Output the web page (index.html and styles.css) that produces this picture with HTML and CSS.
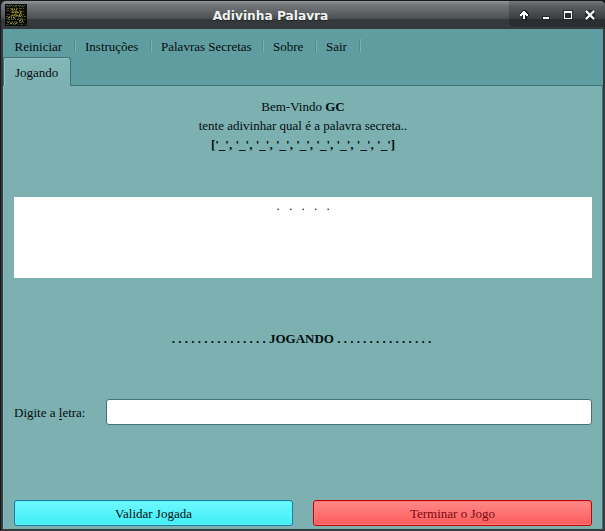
FILE: index.html
```html
<!DOCTYPE html>
<html lang="pt">
<head>
<meta charset="utf-8">
<title>Adivinha Palavra</title>
<link rel="stylesheet" href="styles.css">
</head>
<body>
<div class="window">
  <header class="titlebar">
    <svg class="app-icon" viewBox="0 0 22 22">
      <rect width="22" height="22" fill="#0b0c08"/>
      <g fill="none" stroke-width="1">
        <path stroke="#54572a" stroke-dasharray="2 1 3 1 1 1" d="M1 1.5h19M2 4.5h18M1 12.5h20M3 15.5h17M2 18.5h18"/>
        <path stroke="#354338" stroke-dasharray="3 2 1 1" d="M2 2.5h18M1 6.5h5M16 7.5h5M2 10.5h18M1 14.5h19M2 17.5h18M1 20.5h20"/>
        <path stroke="#8c831b" stroke-dasharray="2 1 1 1" d="M6 5.5h6M7 8.5h9M6 11.5h11M3 13.5h7M14 16.5h5M5 19.5h7"/>
        <path stroke="#aaa018" stroke-width=".8" d="M8 5v3h-2M10 7h2v2h-2zM14 7h2v3h-2M8 11h3M13 12h3"/>
      </g>
    </svg>
    <h1 class="title">Adivinha Palavra</h1>
    <div class="controls">
      <svg viewBox="0 0 96 27" shape-rendering="crispEdges">
        <g fill="#1b1f21"><path d="M14 10h3v1h1v1h1v1h1v3h-2v4h-5v-4h-2v-3h1v-1h1v-1h1z"/><path d="M33 16h8v4h-8zM54 10h10v10H54zM76 10h10v10H76z" fill-opacity=".7"/></g>
        <g fill="#fff"><path d="M14 11h2v1h1v1h1v1h1v2h-2v-1h-1v4h-2v-4h-1v1h-2v-2h1v-1h1v-1h1z"/><path d="M34 17h6v2h-6z"/><path fill-rule="evenodd" d="M55 11h8v8h-8zM56 13v5h6v-5z"/></g>
        <path d="M77.5 11.5l7 7M84.5 11.5l-7 7" stroke="#fff" stroke-width="2.2" stroke-linecap="round" shape-rendering="auto"/>
      </svg>
    </div>
  </header>
  <div class="body">
    <nav class="menu">
      <a class="item reiniciar">Reiniciar</a>
      <a class="item instrucoes">Instruções</a>
      <a class="item palavras">Palavras Secretas</a>
      <a class="item sobre">Sobre</a>
      <a class="item sair">Sair</a>
    </nav>
    <div class="tabs"><div class="tab">Jogando</div><div class="tab-rest"></div></div>
    <main class="panel">
      <div class="intro">
        <p>Bem-Vindo <b>GC</b></p>
        <p>tente adivinhar qual é a palavra secreta..</p>
        <p><b>['_', '_', '_', '_', '_', '_', '_', '_', '_']</b></p>
      </div>
      <div class="board">. &nbsp; . &nbsp; . &nbsp; . &nbsp; .</div>
      <p class="status">. . . . . . . . . . . . . . . JOGANDO . . . . . . . . . . . . . . .</p>
      <div class="field">
        <label for="letra">Digite a <span class="key">l</span>etra:</label>
        <input id="letra" type="text">
      </div>
      <div class="actions">
        <button class="validate">Validar Jogada</button>
        <button class="finish">Terminar o Jogo</button>
      </div>
    </main>
  </div>
</div>
</body>
</html>
```
FILE: styles.css
```css
* { box-sizing: border-box; }
body {
  margin: 0;
  background: #17191f;
  font: 13px/19px "Liberation Serif", serif;
  color: #050e10;
}
p, h1 { margin: 0; }
.window {
  height: 531px;
  display: flex;
  flex-direction: column;
  padding-top: 1px;
  border-left: 1px solid #17191c;
}
.titlebar {
  height: 28px;
  flex: none;
  display: flex;
  border-radius: 5px 5px 0 0;
  background: linear-gradient(#919396 0, #74777a 4px, #4b4f51 18px, #343a3c 18px, #34393b 28px);
}
.app-icon {
  width: 22px;
  height: 22px;
  margin: 3px 0 0 4px;
}
.title {
  flex: 1;
  padding: 1px 0 0 5px;
  text-align: center;
  font: bold 12.2px/28px "DejaVu Sans", sans-serif;
  color: #f1f2f2;
  text-shadow: 0 1px 1px #202425;
}
.controls {
  width: 96px;
  height: 26px;
  border-radius: 0 5px 0 6px;
  overflow: hidden;
  background: linear-gradient(#76787a 0, #5a5d5f 5px, #393d3f 18px, #2a2e30 18px, #2a2e30 26px);
}
.controls svg {
  display: block;
  width: 96px;
  height: 27px;
  margin-top: -1px;
}
.body {
  flex: 1;
  display: flex;
  flex-direction: column;
  border: solid #343a3d;
  border-width: 0 2px 2px;
  background: #609da0;
}
.menu {
  height: 28px;
  flex: none;
  display: flex;
  padding-top: 10px;
}
.item {
  height: 13px;
  line-height: 16px;
  padding-left: 9px;
  border-right: 1px solid #77b2b4;
  box-shadow: inset -1px 0 #528a8d;
  white-space: nowrap;
}
.reiniciar { width: 73px; padding-left: 11.5px; }
.instrucoes { width: 76px; }
.palavras { width: 112px; }
.sobre { width: 53px; }
.sair { width: 44px; }
.tabs { height: 29px; flex: none; display: flex; }
.tab {
  width: 68px;
  padding: 5px 0 0 11px;
  border: 1px solid #427477;
  border-bottom: 0;
  border-radius: 3px 3px 0 0;
  background: linear-gradient(#84b7b8, #7cb0b1);
  box-shadow: inset 1px 1px #95c4c5;
}
.tab-rest {
  flex: 1;
  border-bottom: 1px solid #427477;
}
.panel {
  flex: 1;
  padding: 11px 10px 0;
  border-left: 1px solid #8bbcbd;
  border-right: 1px solid #427477;
  background: #7cb0b1;
}
.intro { height: 100px; text-align: center; }
.board {
  height: 81px;
  line-height: 18px;
  letter-spacing: -.13px;
  text-align: center;
  background: #fff;
}
.status {
  margin-top: 51px;
  padding-right: 3px;
  text-align: center;
  font-weight: bold;
  letter-spacing: -.01px;
}
.field {
  height: 26px;
  margin-top: 51px;
  display: flex;
  align-items: center;
}
.field label { width: 92px; }
.key { display: inline-block; height: 14px; line-height: 13px; border-bottom: 1px solid #050e10; }
.field input {
  flex: 1;
  height: 26px;
  border: 1px solid #427477;
  border-radius: 3px;
  background: #fff;
}
.actions {
  margin-top: 75px;
  display: grid;
  grid-template-columns: 1fr 1fr;
  gap: 20px;
}
button {
  height: 26px;
  padding: 0;
  border-radius: 3px;
  font: inherit;
}
.validate {
  border: 1px solid #1f79a5;
  color: #050e10;
  background: linear-gradient(#6cf9ff, #42edf6);
  box-shadow: inset 0 0 0 1px #5ef6fd;
}
.finish {
  border: 1px solid #c60000;
  color: #7a0c10;
  background: linear-gradient(#ff8989, #fd5b5b);
  box-shadow: inset 0 0 0 1px #ff7c7c;
}
```
